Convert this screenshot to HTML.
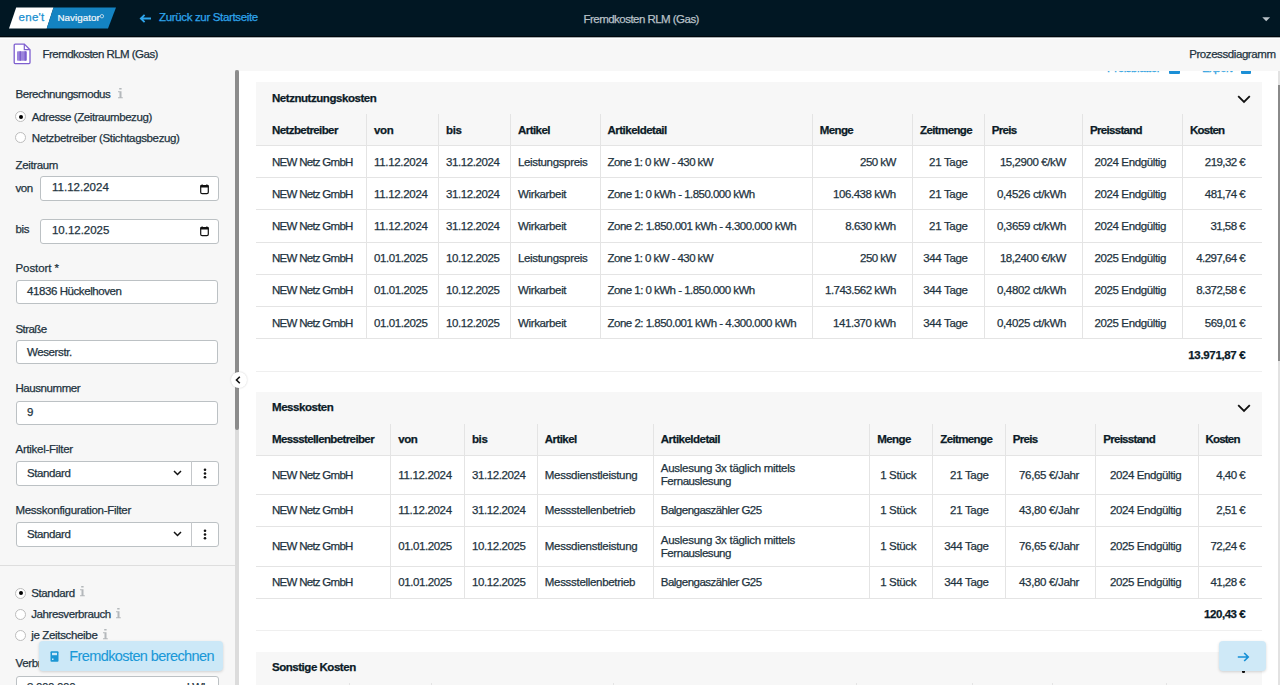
<!DOCTYPE html><html><head><meta charset="utf-8"><title>Fremdkosten RLM (Gas)</title><style>
*{box-sizing:border-box;margin:0;padding:0}
html,body{width:1280px;height:685px;overflow:hidden;background:#fff;font-family:"Liberation Sans",sans-serif;color:#1e3340}
.ab{position:absolute}
.t{position:absolute;white-space:nowrap;font-size:11.5px;line-height:14px;-webkit-text-stroke:0.25px}
.b{font-weight:bold;color:#0c1b27}
.r{text-align:right}
.hl{position:absolute;height:1px;background:#e4e4e4}
.vl{position:absolute;width:1px;background:#e4e4e4}
.inp{position:absolute;background:#fff;border:1px solid #bcc1c4;border-radius:3px}
.radio{position:absolute;width:11px;height:11px;border-radius:50%;border:1px solid #bdbdbd;background:#fff}
.radio.on::after{content:"";position:absolute;left:2.5px;top:2.5px;width:4px;height:4px;border-radius:50%;background:#000}

</style></head><body>
<div class="ab" style="left:0;top:0;width:1280px;height:37px;background:#011723"></div>
<div class="ab" style="left:0;top:35.6px;width:1280px;height:1.4px;background:#00070d"></div>
<svg class="ab" style="left:0;top:0" width="130" height="37" viewBox="0 0 130 37">
<polygon points="16.2,7.5 53.5,7.5 46.7,28.5 9,28.5" fill="#ffffff"/>
<polygon points="53.5,7.5 116,7.5 108,28.5 46.7,28.5" fill="#1483c2"/>
<text x="18.6" y="21.3" font-family="Liberation Sans" font-size="11.5" fill="#1a8fd0" stroke="#1a8fd0" stroke-width="0.25" letter-spacing="0.25">ene't</text>
<text x="57.4" y="21.4" font-family="Liberation Sans" font-size="9.8" fill="#f4f8fb" stroke="#f4f8fb" stroke-width="0.2" letter-spacing="0.05">Navigator</text>
<circle cx="101.9" cy="16.2" r="1.7" fill="none" stroke="#c9dcea" stroke-width="0.9"/>
</svg>
<svg class="ab" style="left:139.3px;top:13.6px" width="13" height="9" viewBox="0 0 13 9"><path d="M12 4.5H1.8M5.6 0.8L1.8 4.5L5.6 8.2" stroke="#2ea5ec" stroke-width="1.8" fill="none"/></svg>
<div class="t" style="left:159px;top:9.90px;letter-spacing:-0.343px;color:#2ea5ec;">Zurück zur Startseite</div>
<div class="t" style="left:583.5px;top:11.50px;letter-spacing:-0.530px;color:#b8c0c7;">Fremdkosten RLM (Gas)</div>
<svg class="ab" style="left:1262px;top:16.5px" width="9" height="5" viewBox="0 0 9 5"><polygon points="0.3,0.3 8.1,0.3 4.2,4.3" fill="#b9c2c8"/></svg>
<div class="ab" style="left:1278px;top:70.5px;width:2px;height:615px;background:#e2e2e2"></div>
<div class="ab" style="left:1278px;top:84.5px;width:2px;height:276px;background:#8a8a8a"></div>
<div class="t" style="left:1107px;top:61.40px;letter-spacing:-0.423px;color:#2aa0e0;">Preisblätter</div>
<div class="ab" style="left:1169px;top:65px;width:11px;height:9px;background:#1b8fd6;border-radius:1px"></div>
<div class="t" style="left:1202px;top:61.40px;letter-spacing:-0.542px;color:#2aa0e0;">Export</div>
<div class="ab" style="left:1240.5px;top:65px;width:10px;height:9px;background:#1b8fd6;border-radius:1px"></div>
<div class="ab" style="left:0;top:37px;width:1280px;height:33.5px;background:#f7f7f7"></div>
<div class="ab" style="left:0;top:37px;width:1280px;height:0.8px;background:#aab0b2"></div>
<div class="ab" style="left:0;top:37.8px;width:1280px;height:1.2px;background:#ffffff"></div>
<svg class="ab" style="left:13px;top:43px" width="19" height="23" viewBox="0 0 19 23">
<path d="M2.2 1.1H11.3L17 6.8V19.6Q17 20.6 16 20.6H2.2Q1.2 20.6 1.2 19.6V2.1Q1.2 1.1 2.2 1.1Z" fill="#ffffff" stroke="#7e5fcf" stroke-width="1.3"/>
<path d="M11.3 1.1V6.6H17" fill="none" stroke="#7e5fcf" stroke-width="1.2"/>
<rect x="4" y="8.2" width="10" height="9.6" rx="0.8" fill="#9c85dc"/>
<path d="M7.2 8.2V17.8M12.2 8.2V17.8" stroke="#6f4fc4" stroke-width="1"/>
</svg>
<div class="t" style="left:42.5px;top:46.50px;letter-spacing:-0.530px;">Fremdkosten RLM (Gas)</div>
<div class="t r" style="left:1176px;top:46.50px;letter-spacing:-0.418px;width:99.58px;">Prozessdiagramm</div>
<div class="ab" style="left:0;top:70.5px;width:235px;height:615px;background:#f7f7f7"></div>
<div class="ab" style="left:235px;top:70px;width:4px;height:615px;background:#dcdcdc"></div>
<div class="ab" style="left:235px;top:70px;width:4px;height:360px;border-radius:2px;background:#8c8c8c"></div>
<div class="t" style="left:15.5px;top:87.40px;letter-spacing:-0.469px;">Berechnungsmodus</div>
<svg class="ab" style="left:118.4px;top:87.8px" width="5" height="11" viewBox="0 0 5 11"><rect x="1.2" y="0" width="2.4" height="1.5" fill="#b4b8bb"/><path d="M0 3.2H3.5V9.3H4.8V10.3H0V9.3H1.5V4.2H0Z" fill="#b4b8bb"/></svg>
<div class="radio on" style="left:15px;top:111px"></div>
<div class="t" style="left:31.8px;top:109.50px;letter-spacing:-0.424px;">Adresse (Zeitraumbezug)</div>
<div class="radio" style="left:15px;top:132px"></div>
<div class="t" style="left:31.8px;top:130.60px;letter-spacing:-0.358px;">Netzbetreiber (Stichtagsbezug)</div>
<div class="t" style="left:15.5px;top:157.90px;letter-spacing:-0.347px;">Zeitraum</div>
<div class="t" style="left:15.5px;top:180.60px;letter-spacing:-0.482px;">von</div>
<div class="inp" style="left:40.3px;top:176.4px;width:178.3px;height:25px"></div>
<div class="t" style="left:52px;top:180.40px;letter-spacing:0.010px;">11.12.2024</div>
<svg class="ab" style="left:199.5px;top:183.6px" width="10" height="11" viewBox="0 0 10 11"><rect x="0.7" y="1.6" width="7.6" height="8.0" rx="1.4" fill="none" stroke="#111" stroke-width="1.2"/><rect x="0.2" y="1.1" width="8.6" height="2.3" rx="0.8" fill="#111"/><rect x="1.6" y="0.3" width="1" height="1.2" fill="#111"/><rect x="6.4" y="0.3" width="1" height="1.2" fill="#111"/></svg>
<div class="t" style="left:15.5px;top:222.40px;letter-spacing:-0.301px;">bis</div>
<div class="inp" style="left:39.7px;top:218.6px;width:178.9px;height:25px"></div>
<div class="t" style="left:52px;top:222.50px;letter-spacing:-0.026px;">10.12.2025</div>
<svg class="ab" style="left:199.5px;top:225.6px" width="10" height="11" viewBox="0 0 10 11"><rect x="0.7" y="1.6" width="7.6" height="8.0" rx="1.4" fill="none" stroke="#111" stroke-width="1.2"/><rect x="0.2" y="1.1" width="8.6" height="2.3" rx="0.8" fill="#111"/><rect x="1.6" y="0.3" width="1" height="1.2" fill="#111"/><rect x="6.4" y="0.3" width="1" height="1.2" fill="#111"/></svg>
<div class="t" style="left:15.5px;top:260.50px;letter-spacing:-0.090px;">Postort *</div>
<div class="inp" style="left:15.7px;top:279.8px;width:202.8px;height:24.6px"></div>
<div class="t" style="left:27px;top:284.30px;letter-spacing:-0.422px;">41836 Hückelhoven</div>
<div class="t" style="left:15.5px;top:321.60px;letter-spacing:-0.569px;">Straße</div>
<div class="inp" style="left:15.7px;top:339.8px;width:202.8px;height:24.6px"></div>
<div class="t" style="left:27px;top:344.70px;letter-spacing:-0.395px;">Weserstr.</div>
<div class="t" style="left:15.5px;top:381.30px;letter-spacing:-0.433px;">Hausnummer</div>
<div class="inp" style="left:15.7px;top:400.8px;width:202.8px;height:24.6px"></div>
<div class="t" style="left:27px;top:405.30px;letter-spacing:-0.316px;">9</div>
<div class="t" style="left:15.5px;top:442.10px;letter-spacing:-0.282px;">Artikel-Filter</div>
<div class="inp" style="left:15.5px;top:461.0px;width:203px;height:25px"></div>
<div class="ab" style="left:191px;top:461.0px;width:1px;height:25px;background:#c4c7ca"></div>
<div class="t" style="left:27px;top:466.30px;letter-spacing:-0.398px;">Standard</div>
<svg class="ab" style="left:173px;top:470.0px" width="9" height="6" viewBox="0 0 9 6"><path d="M1 1L4.5 4.5L8 1" stroke="#111" stroke-width="1.5" fill="none"/></svg>
<svg class="ab" style="left:202.5px;top:468.0px" width="4" height="11" viewBox="0 0 4 11"><circle cx="2" cy="1.7" r="1.3" fill="#111"/><circle cx="2" cy="5.5" r="1.3" fill="#111"/><circle cx="2" cy="9.3" r="1.3" fill="#111"/></svg>
<div class="t" style="left:15.5px;top:503.20px;letter-spacing:-0.301px;">Messkonfiguration-Filter</div>
<div class="inp" style="left:15.5px;top:521.7px;width:203px;height:25px"></div>
<div class="ab" style="left:191px;top:521.7px;width:1px;height:25px;background:#c4c7ca"></div>
<div class="t" style="left:27px;top:527.00px;letter-spacing:-0.398px;">Standard</div>
<svg class="ab" style="left:173px;top:530.7px" width="9" height="6" viewBox="0 0 9 6"><path d="M1 1L4.5 4.5L8 1" stroke="#111" stroke-width="1.5" fill="none"/></svg>
<svg class="ab" style="left:202.5px;top:528.7px" width="4" height="11" viewBox="0 0 4 11"><circle cx="2" cy="1.7" r="1.3" fill="#111"/><circle cx="2" cy="5.5" r="1.3" fill="#111"/><circle cx="2" cy="9.3" r="1.3" fill="#111"/></svg>
<div class="ab" style="left:0;top:565px;width:235px;height:1px;background:#dedede"></div>
<div class="radio on" style="left:15px;top:587.5px"></div>
<div class="t" style="left:31.25px;top:585.90px;letter-spacing:-0.398px;">Standard</div>
<svg class="ab" style="left:79.7px;top:586.3px" width="5" height="11" viewBox="0 0 5 11"><rect x="1.2" y="0" width="2.4" height="1.5" fill="#b4b8bb"/><path d="M0 3.2H3.5V9.3H4.8V10.3H0V9.3H1.5V4.2H0Z" fill="#b4b8bb"/></svg>
<div class="radio" style="left:15px;top:608.5px"></div>
<div class="t" style="left:31.25px;top:607.00px;letter-spacing:-0.410px;">Jahresverbrauch</div>
<svg class="ab" style="left:115.8px;top:607.5px" width="5" height="11" viewBox="0 0 5 11"><rect x="1.2" y="0" width="2.4" height="1.5" fill="#b4b8bb"/><path d="M0 3.2H3.5V9.3H4.8V10.3H0V9.3H1.5V4.2H0Z" fill="#b4b8bb"/></svg>
<div class="radio" style="left:15px;top:630px"></div>
<div class="t" style="left:31.25px;top:628.40px;letter-spacing:-0.341px;">je Zeitscheibe</div>
<svg class="ab" style="left:102.5px;top:628.8px" width="5" height="11" viewBox="0 0 5 11"><rect x="1.2" y="0" width="2.4" height="1.5" fill="#b4b8bb"/><path d="M0 3.2H3.5V9.3H4.8V10.3H0V9.3H1.5V4.2H0Z" fill="#b4b8bb"/></svg>
<div class="t" style="left:15.5px;top:656.40px;letter-spacing:-0.334px;">Verbrauch</div>
<div class="inp" style="left:15.5px;top:675.5px;width:203px;height:25px"></div>
<div class="t" style="left:27px;top:680.00px;letter-spacing:-0.326px;">3.000.000</div>
<div class="t" style="left:187px;top:680.00px;letter-spacing:-0.428px;">kWh</div>
<div class="ab" style="left:38.7px;top:641.3px;width:184px;height:29.3px;border-radius:4px;background:#cce8f7;box-shadow:0 1px 3px rgba(0,0,0,0.16)"></div>
<svg class="ab" style="left:50px;top:651px" width="9" height="11" viewBox="0 0 9 11"><rect x="0.5" y="0.3" width="8" height="10.5" rx="1" fill="#1b96d4"/><rect x="2" y="1.8" width="5" height="2.4" fill="#cfe9f8"/><rect x="2" y="7.5" width="1.5" height="1.5" fill="#cfe9f8"/></svg>
<div class="t" style="left:69.3px;top:647.50px;letter-spacing:-0.599px;font-size:14.5px;line-height:16px;color:#1a98d8;-webkit-text-stroke:0.1px;">Fremdkosten berechnen</div>
<div class="ab" style="left:230.5px;top:372px;width:16px;height:16px;border-radius:50%;background:#fff;box-shadow:0 0 2px rgba(0,0,0,0.2)"></div>
<svg class="ab" style="left:235px;top:376px" width="6" height="8" viewBox="0 0 6 8"><path d="M4.8 0.8L1.5 4L4.8 7.2" stroke="#111" stroke-width="1.6" fill="none"/></svg>
<div class="ab" style="left:256px;top:82px;width:1006px;height:63.400000000000006px;background:#f7f7f7"></div>
<div class="t b" style="left:272px;top:90.50px;letter-spacing:-0.453px;">Netznutzungskosten</div>
<svg class="ab" style="left:1237px;top:94.5px" width="14" height="9" viewBox="0 0 14 9"><path d="M1.2 1.2L7 7L12.8 1.2" stroke="#111" stroke-width="1.8" fill="none"/></svg>
<div class="hl" style="left:256px;width:1006px;top:144.9px"></div>
<div class="hl" style="left:256px;width:1006px;top:177.1px"></div>
<div class="hl" style="left:256px;width:1006px;top:209.4px"></div>
<div class="hl" style="left:256px;width:1006px;top:241.6px"></div>
<div class="hl" style="left:256px;width:1006px;top:273.8px"></div>
<div class="hl" style="left:256px;width:1006px;top:306.0px"></div>
<div class="hl" style="left:256px;width:1006px;top:338.1px"></div>
<div class="hl" style="left:256px;width:1006px;top:370.7px;background:#efefef"></div>
<div class="vl" style="left:366.0px;top:114px;height:224.60000000000002px"></div>
<div class="vl" style="left:438.0px;top:114px;height:224.60000000000002px"></div>
<div class="vl" style="left:510.0px;top:114px;height:224.60000000000002px"></div>
<div class="vl" style="left:599.5px;top:114px;height:224.60000000000002px"></div>
<div class="vl" style="left:811.7px;top:114px;height:224.60000000000002px"></div>
<div class="vl" style="left:912.1px;top:114px;height:224.60000000000002px"></div>
<div class="vl" style="left:983.7px;top:114px;height:224.60000000000002px"></div>
<div class="vl" style="left:1082.1px;top:114px;height:224.60000000000002px"></div>
<div class="vl" style="left:1182.1px;top:114px;height:224.60000000000002px"></div>
<div class="t b" style="left:272px;top:122.70px;letter-spacing:-0.592px;">Netzbetreiber</div>
<div class="t b" style="left:374.0px;top:122.70px;letter-spacing:-0.379px;">von</div>
<div class="t b" style="left:446.0px;top:122.70px;letter-spacing:-0.304px;">bis</div>
<div class="t b" style="left:518.0px;top:122.70px;letter-spacing:-0.557px;">Artikel</div>
<div class="t b" style="left:607.5px;top:122.70px;letter-spacing:-0.510px;">Artikeldetail</div>
<div class="t b" style="left:819.7px;top:122.70px;letter-spacing:-0.604px;">Menge</div>
<div class="t b" style="left:920.1px;top:122.70px;letter-spacing:-0.624px;">Zeitmenge</div>
<div class="t b" style="left:991.7px;top:122.70px;letter-spacing:-0.668px;">Preis</div>
<div class="t b" style="left:1090.1px;top:122.70px;letter-spacing:-0.701px;">Preisstand</div>
<div class="t b" style="left:1190.1px;top:122.70px;letter-spacing:-0.814px;">Kosten</div>
<div class="t" style="left:272px;top:154.50px;letter-spacing:-0.723px;">NEW Netz GmbH</div>
<div class="t" style="left:374.0px;top:154.50px;letter-spacing:-0.310px;">11.12.2024</div>
<div class="t" style="left:446.0px;top:154.50px;letter-spacing:-0.396px;">31.12.2024</div>
<div class="t" style="left:518.0px;top:154.50px;letter-spacing:-0.347px;">Leistungspreis</div>
<div class="t" style="left:607.5px;top:154.50px;letter-spacing:-0.572px;">Zone 1: 0 kW - 430 kW</div>
<div class="t r" style="left:812.2px;top:154.50px;letter-spacing:-0.567px;width:83.53px;">250 kW</div>
<div class="t r" style="left:912.6px;top:154.50px;letter-spacing:-0.317px;width:54.98px;">21 Tage</div>
<div class="t r" style="left:984.2px;top:154.50px;letter-spacing:-0.414px;width:81.69px;">15,2900 €/kW</div>
<div class="t r" style="left:1082.6px;top:154.50px;letter-spacing:-0.381px;width:83.32px;">2024 Endgültig</div>
<div class="t r" style="left:1182.6px;top:154.50px;letter-spacing:-0.558px;width:62.54px;">219,32 €</div>
<div class="t" style="left:272px;top:186.75px;letter-spacing:-0.723px;">NEW Netz GmbH</div>
<div class="t" style="left:374.0px;top:186.75px;letter-spacing:-0.310px;">11.12.2024</div>
<div class="t" style="left:446.0px;top:186.75px;letter-spacing:-0.396px;">31.12.2024</div>
<div class="t" style="left:518.0px;top:186.75px;letter-spacing:-0.357px;">Wirkarbeit</div>
<div class="t" style="left:607.5px;top:186.75px;letter-spacing:-0.523px;">Zone 1: 0 kWh - 1.850.000 kWh</div>
<div class="t r" style="left:812.2px;top:186.75px;letter-spacing:-0.461px;width:83.64px;">106.438 kWh</div>
<div class="t r" style="left:912.6px;top:186.75px;letter-spacing:-0.317px;width:54.98px;">21 Tage</div>
<div class="t r" style="left:984.2px;top:186.75px;letter-spacing:-0.347px;width:81.75px;">0,4526 ct/kWh</div>
<div class="t r" style="left:1082.6px;top:186.75px;letter-spacing:-0.381px;width:83.32px;">2024 Endgültig</div>
<div class="t r" style="left:1182.6px;top:186.75px;letter-spacing:-0.558px;width:62.54px;">481,74 €</div>
<div class="t" style="left:272px;top:219.00px;letter-spacing:-0.723px;">NEW Netz GmbH</div>
<div class="t" style="left:374.0px;top:219.00px;letter-spacing:-0.310px;">11.12.2024</div>
<div class="t" style="left:446.0px;top:219.00px;letter-spacing:-0.396px;">31.12.2024</div>
<div class="t" style="left:518.0px;top:219.00px;letter-spacing:-0.357px;">Wirkarbeit</div>
<div class="t" style="left:607.5px;top:219.00px;letter-spacing:-0.499px;">Zone 2: 1.850.001 kWh - 4.300.000 kWh</div>
<div class="t r" style="left:812.2px;top:219.00px;letter-spacing:-0.509px;width:83.59px;">8.630 kWh</div>
<div class="t r" style="left:912.6px;top:219.00px;letter-spacing:-0.317px;width:54.98px;">21 Tage</div>
<div class="t r" style="left:984.2px;top:219.00px;letter-spacing:-0.347px;width:81.75px;">0,3659 ct/kWh</div>
<div class="t r" style="left:1082.6px;top:219.00px;letter-spacing:-0.381px;width:83.32px;">2024 Endgültig</div>
<div class="t r" style="left:1182.6px;top:219.00px;letter-spacing:-0.511px;width:62.59px;">31,58 €</div>
<div class="t" style="left:272px;top:251.20px;letter-spacing:-0.723px;">NEW Netz GmbH</div>
<div class="t" style="left:374.0px;top:251.20px;letter-spacing:-0.396px;">01.01.2025</div>
<div class="t" style="left:446.0px;top:251.20px;letter-spacing:-0.396px;">10.12.2025</div>
<div class="t" style="left:518.0px;top:251.20px;letter-spacing:-0.347px;">Leistungspreis</div>
<div class="t" style="left:607.5px;top:251.20px;letter-spacing:-0.572px;">Zone 1: 0 kW - 430 kW</div>
<div class="t r" style="left:812.2px;top:251.20px;letter-spacing:-0.567px;width:83.53px;">250 kW</div>
<div class="t r" style="left:912.6px;top:251.20px;letter-spacing:-0.353px;width:54.95px;">344 Tage</div>
<div class="t r" style="left:984.2px;top:251.20px;letter-spacing:-0.414px;width:81.69px;">18,2400 €/kW</div>
<div class="t r" style="left:1082.6px;top:251.20px;letter-spacing:-0.381px;width:83.32px;">2025 Endgültig</div>
<div class="t r" style="left:1182.6px;top:251.20px;letter-spacing:-0.536px;width:62.56px;">4.297,64 €</div>
<div class="t" style="left:272px;top:283.40px;letter-spacing:-0.723px;">NEW Netz GmbH</div>
<div class="t" style="left:374.0px;top:283.40px;letter-spacing:-0.396px;">01.01.2025</div>
<div class="t" style="left:446.0px;top:283.40px;letter-spacing:-0.396px;">10.12.2025</div>
<div class="t" style="left:518.0px;top:283.40px;letter-spacing:-0.357px;">Wirkarbeit</div>
<div class="t" style="left:607.5px;top:283.40px;letter-spacing:-0.523px;">Zone 1: 0 kWh - 1.850.000 kWh</div>
<div class="t r" style="left:812.2px;top:283.40px;letter-spacing:-0.505px;width:83.60px;">1.743.562 kWh</div>
<div class="t r" style="left:912.6px;top:283.40px;letter-spacing:-0.353px;width:54.95px;">344 Tage</div>
<div class="t r" style="left:984.2px;top:283.40px;letter-spacing:-0.347px;width:81.75px;">0,4802 ct/kWh</div>
<div class="t r" style="left:1082.6px;top:283.40px;letter-spacing:-0.381px;width:83.32px;">2025 Endgültig</div>
<div class="t r" style="left:1182.6px;top:283.40px;letter-spacing:-0.536px;width:62.56px;">8.372,58 €</div>
<div class="t" style="left:272px;top:315.55px;letter-spacing:-0.723px;">NEW Netz GmbH</div>
<div class="t" style="left:374.0px;top:315.55px;letter-spacing:-0.396px;">01.01.2025</div>
<div class="t" style="left:446.0px;top:315.55px;letter-spacing:-0.396px;">10.12.2025</div>
<div class="t" style="left:518.0px;top:315.55px;letter-spacing:-0.357px;">Wirkarbeit</div>
<div class="t" style="left:607.5px;top:315.55px;letter-spacing:-0.499px;">Zone 2: 1.850.001 kWh - 4.300.000 kWh</div>
<div class="t r" style="left:812.2px;top:315.55px;letter-spacing:-0.461px;width:83.64px;">141.370 kWh</div>
<div class="t r" style="left:912.6px;top:315.55px;letter-spacing:-0.353px;width:54.95px;">344 Tage</div>
<div class="t r" style="left:984.2px;top:315.55px;letter-spacing:-0.347px;width:81.75px;">0,4025 ct/kWh</div>
<div class="t r" style="left:1082.6px;top:315.55px;letter-spacing:-0.381px;width:83.32px;">2025 Endgültig</div>
<div class="t r" style="left:1182.6px;top:315.55px;letter-spacing:-0.558px;width:62.54px;">569,01 €</div>
<div class="t b r" style="left:1062px;top:347.90px;letter-spacing:-0.333px;width:183.37px;">13.971,87 €</div>
<div class="ab" style="left:256px;top:391.8px;width:1006px;height:63.39999999999998px;background:#f7f7f7"></div>
<div class="t b" style="left:272px;top:400.30px;letter-spacing:-0.444px;">Messkosten</div>
<svg class="ab" style="left:1237px;top:404.3px" width="14" height="9" viewBox="0 0 14 9"><path d="M1.2 1.2L7 7L12.8 1.2" stroke="#111" stroke-width="1.8" fill="none"/></svg>
<div class="hl" style="left:256px;width:1006px;top:454.7px"></div>
<div class="hl" style="left:256px;width:1006px;top:493.9px"></div>
<div class="hl" style="left:256px;width:1006px;top:525.9px"></div>
<div class="hl" style="left:256px;width:1006px;top:565.7px"></div>
<div class="hl" style="left:256px;width:1006px;top:597.7px"></div>
<div class="hl" style="left:256px;width:1006px;top:630.1px;background:#efefef"></div>
<div class="vl" style="left:390.2px;top:424px;height:174.20000000000005px"></div>
<div class="vl" style="left:463.9px;top:424px;height:174.20000000000005px"></div>
<div class="vl" style="left:536.8px;top:424px;height:174.20000000000005px"></div>
<div class="vl" style="left:652.8px;top:424px;height:174.20000000000005px"></div>
<div class="vl" style="left:869.3px;top:424px;height:174.20000000000005px"></div>
<div class="vl" style="left:932.3px;top:424px;height:174.20000000000005px"></div>
<div class="vl" style="left:1004.7px;top:424px;height:174.20000000000005px"></div>
<div class="vl" style="left:1095.2px;top:424px;height:174.20000000000005px"></div>
<div class="vl" style="left:1197.5px;top:424px;height:174.20000000000005px"></div>
<div class="t b" style="left:272px;top:431.80px;letter-spacing:-0.621px;">Messstellenbetreiber</div>
<div class="t b" style="left:398.2px;top:431.80px;letter-spacing:-0.379px;">von</div>
<div class="t b" style="left:471.9px;top:431.80px;letter-spacing:-0.304px;">bis</div>
<div class="t b" style="left:544.8px;top:431.80px;letter-spacing:-0.557px;">Artikel</div>
<div class="t b" style="left:660.8px;top:431.80px;letter-spacing:-0.510px;">Artikeldetail</div>
<div class="t b" style="left:877.3px;top:431.80px;letter-spacing:-0.604px;">Menge</div>
<div class="t b" style="left:940.3px;top:431.80px;letter-spacing:-0.624px;">Zeitmenge</div>
<div class="t b" style="left:1012.7px;top:431.80px;letter-spacing:-0.668px;">Preis</div>
<div class="t b" style="left:1103.2px;top:431.80px;letter-spacing:-0.701px;">Preisstand</div>
<div class="t b" style="left:1205.5px;top:431.80px;letter-spacing:-0.814px;">Kosten</div>
<div class="t" style="left:272px;top:467.80px;letter-spacing:-0.723px;">NEW Netz GmbH</div>
<div class="t" style="left:398.2px;top:467.80px;letter-spacing:-0.310px;">11.12.2024</div>
<div class="t" style="left:471.9px;top:467.80px;letter-spacing:-0.396px;">31.12.2024</div>
<div class="t" style="left:544.8px;top:467.80px;letter-spacing:-0.290px;">Messdienstleistung</div>
<div class="t" style="left:660.8px;top:461.20px;letter-spacing:-0.275px;">Auslesung 3x täglich mittels</div>
<div class="t" style="left:660.8px;top:474.40px;letter-spacing:-0.452px;">Fernauslesung</div>
<div class="t r" style="left:869.8px;top:467.80px;letter-spacing:-0.351px;width:46.35px;">1 Stück</div>
<div class="t r" style="left:932.8px;top:467.80px;letter-spacing:-0.317px;width:55.78px;">21 Tage</div>
<div class="t r" style="left:1005.2px;top:467.80px;letter-spacing:-0.328px;width:73.87px;">76,65 €/Jahr</div>
<div class="t r" style="left:1095.7px;top:467.80px;letter-spacing:-0.381px;width:85.62px;">2024 Endgültig</div>
<div class="t r" style="left:1198px;top:467.80px;letter-spacing:-0.514px;width:47.19px;">4,40 €</div>
<div class="t" style="left:272px;top:503.40px;letter-spacing:-0.723px;">NEW Netz GmbH</div>
<div class="t" style="left:398.2px;top:503.40px;letter-spacing:-0.310px;">11.12.2024</div>
<div class="t" style="left:471.9px;top:503.40px;letter-spacing:-0.396px;">31.12.2024</div>
<div class="t" style="left:544.8px;top:503.40px;letter-spacing:-0.305px;">Messstellenbetrieb</div>
<div class="t" style="left:660.8px;top:503.40px;letter-spacing:-0.516px;">Balgengaszähler G25</div>
<div class="t r" style="left:869.8px;top:503.40px;letter-spacing:-0.351px;width:46.35px;">1 Stück</div>
<div class="t r" style="left:932.8px;top:503.40px;letter-spacing:-0.317px;width:55.78px;">21 Tage</div>
<div class="t r" style="left:1005.2px;top:503.40px;letter-spacing:-0.328px;width:73.87px;">43,80 €/Jahr</div>
<div class="t r" style="left:1095.7px;top:503.40px;letter-spacing:-0.381px;width:85.62px;">2024 Endgültig</div>
<div class="t r" style="left:1198px;top:503.40px;letter-spacing:-0.514px;width:47.19px;">2,51 €</div>
<div class="t" style="left:272px;top:539.30px;letter-spacing:-0.723px;">NEW Netz GmbH</div>
<div class="t" style="left:398.2px;top:539.30px;letter-spacing:-0.396px;">01.01.2025</div>
<div class="t" style="left:471.9px;top:539.30px;letter-spacing:-0.396px;">10.12.2025</div>
<div class="t" style="left:544.8px;top:539.30px;letter-spacing:-0.290px;">Messdienstleistung</div>
<div class="t" style="left:660.8px;top:532.70px;letter-spacing:-0.275px;">Auslesung 3x täglich mittels</div>
<div class="t" style="left:660.8px;top:545.90px;letter-spacing:-0.452px;">Fernauslesung</div>
<div class="t r" style="left:869.8px;top:539.30px;letter-spacing:-0.351px;width:46.35px;">1 Stück</div>
<div class="t r" style="left:932.8px;top:539.30px;letter-spacing:-0.353px;width:55.75px;">344 Tage</div>
<div class="t r" style="left:1005.2px;top:539.30px;letter-spacing:-0.328px;width:73.87px;">76,65 €/Jahr</div>
<div class="t r" style="left:1095.7px;top:539.30px;letter-spacing:-0.381px;width:85.62px;">2025 Endgültig</div>
<div class="t r" style="left:1198px;top:539.30px;letter-spacing:-0.511px;width:47.19px;">72,24 €</div>
<div class="t" style="left:272px;top:575.20px;letter-spacing:-0.723px;">NEW Netz GmbH</div>
<div class="t" style="left:398.2px;top:575.20px;letter-spacing:-0.396px;">01.01.2025</div>
<div class="t" style="left:471.9px;top:575.20px;letter-spacing:-0.396px;">10.12.2025</div>
<div class="t" style="left:544.8px;top:575.20px;letter-spacing:-0.305px;">Messstellenbetrieb</div>
<div class="t" style="left:660.8px;top:575.20px;letter-spacing:-0.516px;">Balgengaszähler G25</div>
<div class="t r" style="left:869.8px;top:575.20px;letter-spacing:-0.351px;width:46.35px;">1 Stück</div>
<div class="t r" style="left:932.8px;top:575.20px;letter-spacing:-0.353px;width:55.75px;">344 Tage</div>
<div class="t r" style="left:1005.2px;top:575.20px;letter-spacing:-0.328px;width:73.87px;">43,80 €/Jahr</div>
<div class="t r" style="left:1095.7px;top:575.20px;letter-spacing:-0.381px;width:85.62px;">2025 Endgültig</div>
<div class="t r" style="left:1198px;top:575.20px;letter-spacing:-0.511px;width:47.19px;">41,28 €</div>
<div class="t b r" style="left:1062px;top:607.40px;letter-spacing:-0.446px;width:183.25px;">120,43 €</div>
<div class="ab" style="left:256px;top:651.7px;width:1006px;height:40px;background:#f7f7f7"></div>
<div class="t b" style="left:272px;top:660.20px;letter-spacing:-0.469px;">Sonstige Kosten</div>
<div class="vl" style="left:348.5px;top:683px;height:10px"></div>
<div class="vl" style="left:430.5px;top:683px;height:10px"></div>
<div class="vl" style="left:612.5px;top:683px;height:10px"></div>
<div class="vl" style="left:856.2px;top:683px;height:10px"></div>
<div class="vl" style="left:971.5px;top:683px;height:10px"></div>
<div class="vl" style="left:1052.0px;top:683px;height:10px"></div>
<div class="vl" style="left:1165.5px;top:683px;height:10px"></div>
<div class="ab" style="left:1242.3px;top:670px;width:3px;height:2.5px;background:#111;border-radius:1px"></div>
<div class="ab" style="left:1219px;top:641.2px;width:47px;height:29.6px;border-radius:4px;background:#cfe9f7;box-shadow:0 1px 3px rgba(0,0,0,0.16)"></div>
<svg class="ab" style="left:1236.5px;top:651.5px" width="13" height="10" viewBox="0 0 13 10"><path d="M0.8 5H11.2M7.2 1L11.2 5L7.2 9" stroke="#1790d6" stroke-width="1.7" fill="none"/></svg>
</body></html>
